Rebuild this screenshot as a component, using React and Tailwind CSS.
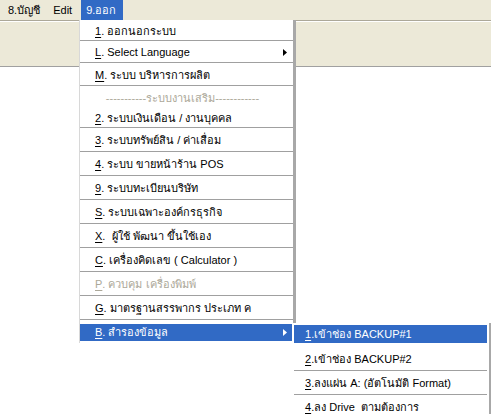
const MENU = [
  { key: "1", label: ". ออกนอกระบบ", h: "h-[21px]" },
  { key: "L", label: ". Select Language", h: "h-[22px]", sub: true },
  { key: "M", label: ". ระบบ บริหารการผลิต", h: "h-[23px]" },
  { sep: "-----------ระบบงานเสริม------------", h: "h-[21px]" },
  { key: "2", label: ". ระบบเงินเดือน / งานบุคคล", h: "h-[21px]" },
  { key: "3", label: ". ระบบทรัพย์สิน / ค่าเสื่อม", h: "h-[24px]" },
  { key: "4", label: ". ระบบ ขายหน้าร้าน POS", h: "h-[24px]" },
  { key: "9", label: ". ระบบทะเบียนบริษัท", h: "h-[24px]" },
  { key: "S", label: ". ระบบเฉพาะองค์กรธุรกิจ", h: "h-[24px]" },
  { key: "X", label: ".  ผู้ใช้ พัฒนา ขึ้นใช้เอง", h: "h-[24px]" },
  { key: "C", label: ". เครื่องคิดเลข ( Calculator )", h: "h-[24px]" },
  { key: "P", label: ". ควบคุม เครื่องพิมพ์", h: "h-[24px]", disabled: true },
  { key: "G", label: ". มาตรฐานสรรพากร ประเภท ค", h: "h-[24px]" },
];

const BACKUP = [
  { key: "1", label: ".เข้าช่อง BACKUP#1", active: true },
  { key: "2", label: ".เข้าช่อง BACKUP#2" },
  { key: "3", label: ".ลงแผ่น A: (อัตโนมัติ Format)" },
  { key: "4", label: ".ลง Drive  ตามต้องการ" },
];

function Arrow({ white }) {
  return (
    <svg width="4" height="7" viewBox="0 0 4 7" className="shrink-0">
      <path d="M0 0 L4 3.5 L0 7 Z" fill={white ? "#fff" : "#000"} />
    </svg>
  );
}

export default function App() {
  return (
    <div
      className="relative w-[491px] h-[414px] overflow-hidden bg-white text-[11px] text-black"
      style={{ fontFamily: "Tahoma, 'Liberation Sans', 'Noto Sans', sans-serif" }}
    >
      {/* menu bar */}
      <div className="h-[20px] bg-[#ECE9D8] flex items-stretch pl-[4px]">
        <div className="px-[4px] flex items-center">8.บัญชี</div>
        <div className="px-[4px] ml-[5px] flex items-center">Edit</div>
        <div className="px-[5px] ml-[5px] w-[42px] flex items-center bg-[#316AC5] text-white">9.ออก</div>
      </div>

      {/* toolbar strip */}
      <div className="h-[47px] bg-[#ECE9D8] border-t border-[#ACA899] shadow-[inset_0_1px_0_#fff] border-b border-b-[#A0A0A0]" />

      {/* main dropdown */}
      <div className="absolute left-[79px] top-[20px] w-[217px] bg-white border-l border-[#D8D8D8] border-r-[3px] border-r-[#A8A8A8]">
        {MENU.map((m, i) =>
          m.sep ? (
            <div key={i} className={`${m.h} flex items-end justify-center pr-[8px] pb-[1px] text-[#ACA899]`}>
              {m.sep}
            </div>
          ) : (
            <div
              key={i}
              className={`${m.h} flex items-center pl-[15px] pr-[6px] pt-[2px] border-b border-[#A0A0A0] ${
                m.disabled ? "text-[#ACA899]" : ""
              }`}
            >
              <span className="underline underline-offset-2">{m.key}</span>
              <span className="flex-1 whitespace-pre">{m.label}</span>
              {m.sub && <Arrow />}
            </div>
          )
        )}
        <div className="h-[23px] pt-[4px] pb-[2px]">
          <div className="h-full flex items-center pl-[15px] pr-[6px] bg-[#316AC5] text-white">
            <span className="underline underline-offset-2">B</span>
            <span className="flex-1">. สำรองข้อมูล</span>
            <Arrow white />
          </div>
        </div>
      </div>

      {/* backup submenu */}
      <div className="absolute left-[292px] top-[323px] w-[199px] bg-white border-r-[2px] border-r-[#A8A8A8]">
        {BACKUP.map((b, i) => (
          <div key={i} className={`h-[24px] ${b.active ? "p-[2px] pb-[4px]" : "pt-[1px] border-b border-[#A0A0A0] mx-[2px]"}`}>
            <div
              className={`h-full flex items-center pl-[11px] ${
                b.active ? "bg-[#316AC5] text-white" : ""
              }`}
            >
              <span className="underline underline-offset-2">{b.key}</span>
              <span className="whitespace-pre">{b.label}</span>
            </div>
          </div>
        ))}
      </div>
    </div>
  );
}
